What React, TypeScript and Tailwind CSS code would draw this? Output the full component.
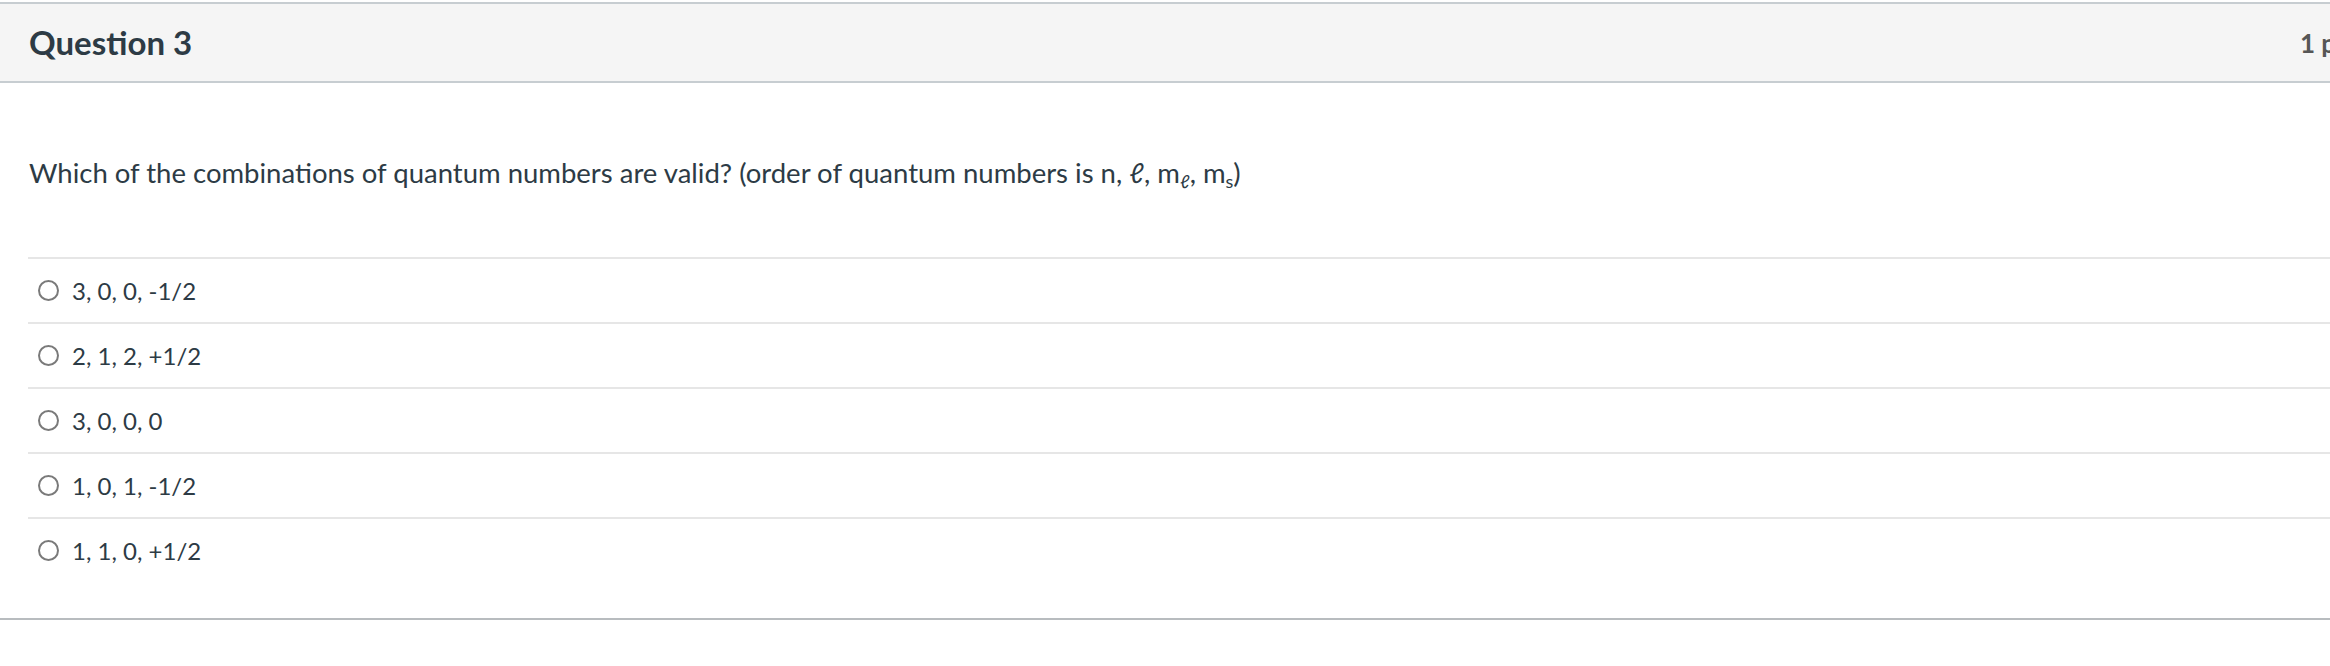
import React from "react";

const answers = ["3, 0, 0, -1/2", "2, 1, 2, +1/2", "3, 0, 0, 0", "1, 0, 1, -1/2", "1, 1, 0, +1/2"];

const App: React.FC = () => {
  return (
    <div className="w-full min-h-screen bg-white overflow-hidden font-['Lato',sans-serif] text-[#2d3b45]">
      <div className="w-[2386px] pt-[2px]">
        {/* Header */}
        <div className="h-[81px] flex items-center justify-between px-[29px] bg-[#f5f5f5] border-t-2 border-b-2 border-[#c7cdd1]">
          <h2 className="text-[33px] font-bold leading-none">Question 3</h2>
          <span className="text-[26px] font-bold text-[#565656] leading-none">1 pts</span>
        </div>

        {/* Question text */}
        <div className="pt-[70px] pb-[65px] px-[29px]">
          <p className="text-[27.5px] leading-[39px]">
            Which of the combinations of quantum numbers are valid? (order of quantum numbers is n, ℓ, m
            <sub className="text-[18px]">ℓ</sub>, m<sub className="text-[18px]">s</sub>)
          </p>
        </div>

        {/* Answers */}
        <div className="pl-[28px] pb-[36px] border-b-2 border-[#b8bcbf]">
          {answers.map((a) => (
            <label key={a} className="h-[65px] flex items-center border-t-2 border-[#e6e6e6] pl-[10px]">
              <span className="w-[21px] h-[21px] rounded-full border-2 border-[#7a7a7a] bg-white shrink-0" />
              <span className="ml-[13px] text-[24px] leading-none">{a}</span>
            </label>
          ))}
        </div>
      </div>
    </div>
  );
};

export default App;
